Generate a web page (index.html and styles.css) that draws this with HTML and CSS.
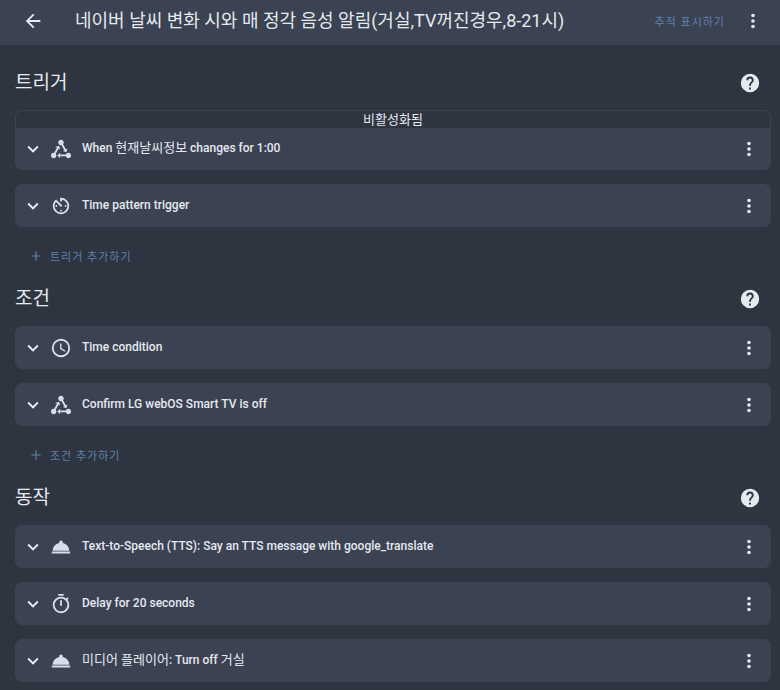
FILE: index.html
```html
<!DOCTYPE html>
<html lang="ko">
  <head>
    <meta charset="UTF-8" />
    <meta name="viewport" content="width=device-width, initial-scale=1.0" />
    <title>자동화 편집</title>
    <link rel="stylesheet" href="styles.css">
  </head>
  <body>
    <!-- Shared icons -->
    <svg class="sprite" aria-hidden="true">
      <symbol id="back" viewBox="0 0 24 24">
        <path d="M20,11V13H8L13.5,18.5L12.08,19.92L4.16,12L12.08,4.08L13.5,5.5L8,11H20Z" />
      </symbol>
      <symbol id="chevron" viewBox="0 0 24 24">
        <path d="M7.41,8.58L12,13.17L16.59,8.58L18,10L12,16L6,10L7.41,8.58Z" />
      </symbol>
      <symbol id="dots" viewBox="0 0 24 24">
        <circle cx="12" cy="6" r="2" />
        <circle cx="12" cy="12" r="2" />
        <circle cx="12" cy="18" r="2" />
      </symbol>
      <symbol id="help" viewBox="0 0 24 24">
        <path d="M15.07,11.25L14.17,12.17C13.45,12.89 13,13.5 13,15H11V14.5C11,13.39 11.45,12.39 12.17,11.67L13.41,10.41C13.78,10.05 14,9.55 14,9C14,7.89 13.1,7 12,7A2,2 0 0,0 10,9H8A4,4 0 0,1 12,5A4,4 0 0,1 16,9C16,9.88 15.64,10.67 15.07,11.25M13,19H11V17H13M12,2A10,10 0 0,0 2,12A10,10 0 0,0 12,22A10,10 0 0,0 22,12C22,6.47 17.5,2 12,2Z" />
      </symbol>
      <symbol id="plus" viewBox="0 0 24 24">
        <path d="M20,13H13V20H11V13H4V11H11V4H13V11H20V13Z" />
      </symbol>
      <symbol id="state" viewBox="0 0 24 24">
        <path d="M6.27 17.05C6.72 17.58 7 18.25 7 19C7 20.66 5.66 22 4 22S1 20.66 1 19 2.34 16 4 16C4.18 16 4.36 16 4.53 16.05L7.6 10.69L5.86 9.7L9.95 8.58L11.07 12.67L9.33 11.68L6.27 17.05M20 16C18.7 16 17.6 16.84 17.18 18H11V16L8 19L11 22V20H17.18C17.6 21.16 18.7 22 20 22C21.66 22 23 20.66 23 19S21.66 16 20 16M12 8C12.18 8 12.36 8 12.53 7.95L15.6 13.31L13.86 14.3L17.95 15.42L19.07 11.33L17.33 12.32L14.27 6.95C14.72 6.42 15 5.75 15 5C15 3.34 13.66 2 12 2S9 3.34 9 5 10.34 8 12 8Z" />
      </symbol>
      <symbol id="pattern" viewBox="0 0 24 24">
        <path d="M11,3V7H13V5.08C16.39,5.57 19,8.47 19,12A7,7 0 0,1 12,19A7,7 0 0,1 5,12C5,10.32 5.59,8.78 6.58,7.58L12,13L13.41,11.59L6.61,4.79V4.81C4.42,6.45 3,9.05 3,12A9,9 0 0,0 12,21A9,9 0 0,0 21,12A9,9 0 0,0 12,3Z" />
        <circle cx="12" cy="17" r="1" />
        <circle cx="17" cy="12" r="1" />
        <circle cx="7" cy="12" r="1" />
      </symbol>
      <symbol id="clock" viewBox="0 0 24 24">
        <path d="M12,20A8,8 0 0,0 20,12A8,8 0 0,0 12,4A8,8 0 0,0 4,12A8,8 0 0,0 12,20M12,2A10,10 0 0,1 22,12A10,10 0 0,1 12,22C6.47,22 2,17.5 2,12A10,10 0 0,1 12,2M12.5,7V12.25L17,14.92L16.25,16.15L11,13V7H12.5Z" />
      </symbol>
      <symbol id="service" viewBox="0 0 24 24">
        <path d="M12,5A2,2 0 0,1 14,7C14,7.24 13.96,7.47 13.88,7.69C17.95,8.5 21,11.91 21,16H3C3,11.91 6.05,8.5 10.12,7.69C10.04,7.47 10,7.24 10,7A2,2 0 0,1 12,5M22,19H2V17H22V19Z" />
      </symbol>
      <symbol id="timer" viewBox="0 0 24 24">
        <path d="M12,20A7,7 0 0,1 5,13A7,7 0 0,1 12,6A7,7 0 0,1 19,13A7,7 0 0,1 12,20M19.03,7.39L20.45,5.97C20,5.46 19.55,5 19.04,4.56L17.62,6C16.07,4.74 14.12,4 12,4A9,9 0 0,0 3,13A9,9 0 0,0 12,22C17,22 21,17.97 21,13C21,10.88 20.26,8.93 19.03,7.39M11,14H13V8H11M15,1H9V3H15V1Z" />
      </symbol>
    </svg>

    <header class="toolbar">
      <button type="button" class="icon-button" aria-label="뒤로"><svg class="icon"><use href="#back" /></svg></button>
      <h1>네이버 날씨 변화 시와 매 정각 음성 알림(거실,TV꺼진경우,8-21시)</h1>
      <button type="button" class="text-button">추적 표시하기</button>
      <button type="button" class="icon-button" aria-label="메뉴"><svg class="icon"><use href="#dots" /></svg></button>
    </header>

    <main>
      <section>
        <div class="section-header">
          <h2>트리거</h2>
          <button type="button" class="icon-button" aria-label="도움말"><svg class="icon"><use href="#help" /></svg></button>
        </div>
        <div class="cards">
          <article class="card">
            <div class="disabled-bar">비활성화됨</div>
            <div class="row">
              <button type="button" class="icon-button" aria-label="펼치기"><svg class="icon"><use href="#chevron" /></svg></button>
              <svg class="icon type-icon"><use href="#state" /></svg>
              <h3>When <span class="ko">현재날씨정보</span> changes for 1:00</h3>
              <button type="button" class="icon-button" aria-label="메뉴"><svg class="icon"><use href="#dots" /></svg></button>
            </div>
          </article>
          <article class="card">
            <div class="row">
              <button type="button" class="icon-button" aria-label="펼치기"><svg class="icon"><use href="#chevron" /></svg></button>
              <svg class="icon type-icon"><use href="#pattern" /></svg>
              <h3>Time pattern trigger</h3>
              <button type="button" class="icon-button" aria-label="메뉴"><svg class="icon"><use href="#dots" /></svg></button>
            </div>
          </article>
        </div>
        <button type="button" class="text-button add-button"><svg class="plus"><use href="#plus" /></svg>트리거 추가하기</button>
      </section>

      <section>
        <div class="section-header">
          <h2>조건</h2>
          <button type="button" class="icon-button" aria-label="도움말"><svg class="icon"><use href="#help" /></svg></button>
        </div>
        <div class="cards">
          <article class="card">
            <div class="row">
              <button type="button" class="icon-button" aria-label="펼치기"><svg class="icon"><use href="#chevron" /></svg></button>
              <svg class="icon type-icon"><use href="#clock" /></svg>
              <h3>Time condition</h3>
              <button type="button" class="icon-button" aria-label="메뉴"><svg class="icon"><use href="#dots" /></svg></button>
            </div>
          </article>
          <article class="card">
            <div class="row">
              <button type="button" class="icon-button" aria-label="펼치기"><svg class="icon"><use href="#chevron" /></svg></button>
              <svg class="icon type-icon"><use href="#state" /></svg>
              <h3>Confirm LG webOS Smart TV is off</h3>
              <button type="button" class="icon-button" aria-label="메뉴"><svg class="icon"><use href="#dots" /></svg></button>
            </div>
          </article>
        </div>
        <button type="button" class="text-button add-button"><svg class="plus"><use href="#plus" /></svg>조건 추가하기</button>
      </section>

      <section>
        <div class="section-header">
          <h2>동작</h2>
          <button type="button" class="icon-button" aria-label="도움말"><svg class="icon"><use href="#help" /></svg></button>
        </div>
        <div class="cards">
          <article class="card">
            <div class="row">
              <button type="button" class="icon-button" aria-label="펼치기"><svg class="icon"><use href="#chevron" /></svg></button>
              <svg class="icon type-icon"><use href="#service" /></svg>
              <h3>Text-to-Speech (TTS): Say an TTS message with google_translate</h3>
              <button type="button" class="icon-button" aria-label="메뉴"><svg class="icon"><use href="#dots" /></svg></button>
            </div>
          </article>
          <article class="card">
            <div class="row">
              <button type="button" class="icon-button" aria-label="펼치기"><svg class="icon"><use href="#chevron" /></svg></button>
              <svg class="icon type-icon"><use href="#timer" /></svg>
              <h3>Delay for 20 seconds</h3>
              <button type="button" class="icon-button" aria-label="메뉴"><svg class="icon"><use href="#dots" /></svg></button>
            </div>
          </article>
          <article class="card">
            <div class="row">
              <button type="button" class="icon-button" aria-label="펼치기"><svg class="icon"><use href="#chevron" /></svg></button>
              <svg class="icon type-icon"><use href="#service" /></svg>
              <h3><span class="ko">미디어 플레이어</span>: Turn off <span class="ko">거실</span></h3>
              <button type="button" class="icon-button" aria-label="메뉴"><svg class="icon"><use href="#dots" /></svg></button>
            </div>
          </article>
        </div>
      </section>
    </main>
  </body>
</html>
```

FILE: styles.css
```css
* {
  box-sizing: border-box;
}

body {
  margin: 0;
  background-color: #2e3440;
  color: #e5e9f0;
  font-family: Roboto, "Noto Sans CJK KR", sans-serif;
  font-size: 13px;
}

h1,
h2,
h3 {
  margin: 0;
  font-weight: 400;
}

button {
  border: none;
  padding: 0;
  background: none;
  color: inherit;
  font-family: inherit;
  cursor: pointer;
}

.sprite {
  display: none;
}

.icon {
  display: block;
  width: 22px;
  height: 22px;
  fill: currentColor;
}

.icon-button {
  flex: none;
}

.toolbar {
  display: flex;
  align-items: center;
  height: 45px;
  padding: 0 16px 4px 22px;
  background-color: #3b4252;
}

.toolbar h1 {
  flex: 1;
  margin-left: 31px;
  font-size: 18px;
  line-height: 24px;
  white-space: nowrap;
}

.text-button {
  color: #5e81ac;
  font-size: 11px;
  letter-spacing: 1px;
  white-space: nowrap;
}

.toolbar .text-button {
  margin-right: 17px;
}

main {
  padding: 11px 9px 7px 15px;
}

.section-header {
  display: flex;
  align-items: center;
  justify-content: space-between;
  height: 54px;
  padding-right: 10px;
}

.section-header h2 {
  font-size: 19px;
  line-height: 24px;
}

.cards {
  display: flex;
  flex-direction: column;
  gap: 14px;
}

.card {
  overflow: hidden;
  border: 1px solid #3b4252;
  border-radius: 7px;
  background-color: #3b4252;
}

.disabled-bar {
  background-color: #2e3440;
  font-size: 13px;
  line-height: 17px;
  text-align: center;
}

.row {
  display: flex;
  align-items: center;
  height: 41px;
  padding: 0 10px 0 6px;
}

.type-icon {
  flex: none;
  margin: 0 10px 0 6px;
  color: #d8dee9;
}

.row h3 {
  flex: 1;
  padding-bottom: 2px;
  font-size: 12px;
  font-weight: 500;
  line-height: 20px;
}

.row .ko {
  font-size: 13px;
  font-weight: 400;
}

.add-button {
  display: flex;
  align-items: center;
  height: 32px;
  margin: 13px 0 0 14px;
}

.plus {
  width: 14px;
  height: 14px;
  margin-right: 7px;
  fill: currentColor;
}
```
